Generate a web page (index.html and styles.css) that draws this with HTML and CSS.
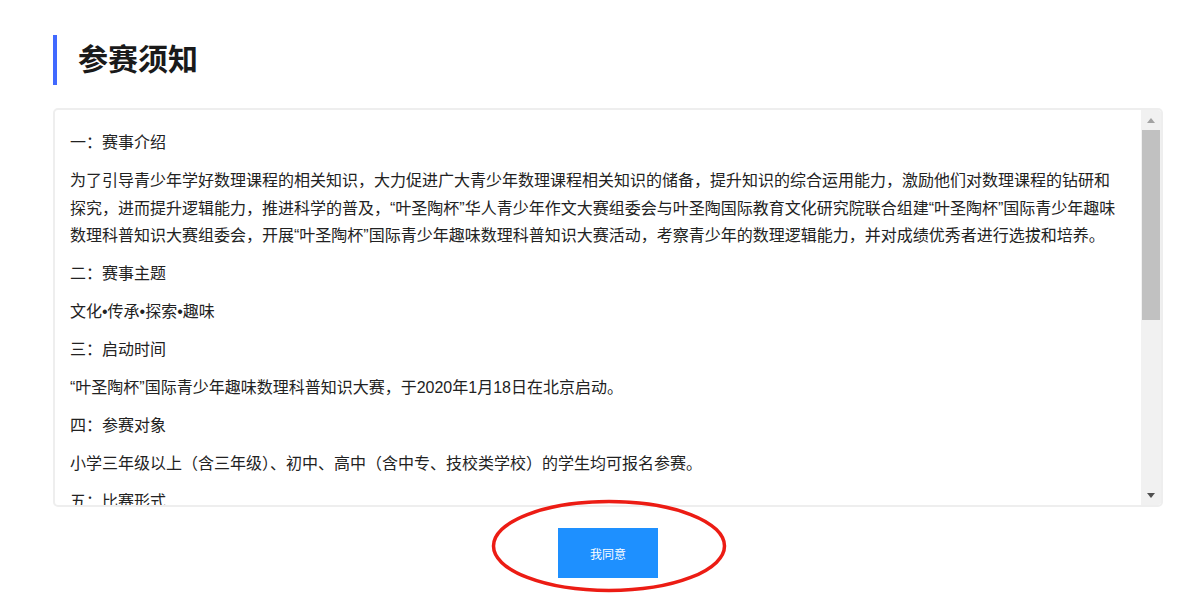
FILE: index.html
```html
<!DOCTYPE html>
<html lang="zh-CN">
<head>
    <meta charset="UTF-8">
    <meta name="viewport" content="width=device-width, initial-scale=1.0">
    <title>参赛须知</title>
    <link rel="stylesheet" href="styles.css">
</head>
<body>

    <div class="page">
        <h2 class="title">参赛须知</h2>

        <div class="notice">
            <div class="notice-body">
                <p>一：赛事介绍</p>
                <p>为了引导青少年学好数理课程的相关知识，大力促进广大青少年数理课程相关知识的储备，提升知识的综合运用能力，激励他们对数理课程的钻研和探究，进而提升逻辑能力，推进科学的普及，“叶圣陶杯”华人青少年作文大赛组委会与叶圣陶国际教育文化研究院联合组建“叶圣陶杯”国际青少年趣味数理科普知识大赛组委会，开展“叶圣陶杯”国际青少年趣味数理科普知识大赛活动，考察青少年的数理逻辑能力，并对成绩优秀者进行选拔和培养。</p>
                <p>二：赛事主题</p>
                <p>文化•传承•探索•趣味</p>
                <p>三：启动时间</p>
                <p>“叶圣陶杯”国际青少年趣味数理科普知识大赛，于2020年1月18日在北京启动。</p>
                <p>四：参赛对象</p>
                <p>小学三年级以上（含三年级）、初中、高中（含中专、技校类学校）的学生均可报名参赛。</p>
                <p>五：比赛形式</p>
                <p>大赛分为初赛、复赛和决赛三个阶段，初赛采用线上答题的形式进行。</p>
                <p>六：奖项设置</p>
                <p>大赛设一等奖、二等奖、三等奖及优秀奖，获奖者颁发证书。</p>
            </div>
            <div class="scrollbar">
                <div class="scroll-btn"><span class="arrow-up"></span></div>
                <div class="scroll-track"><div class="scroll-thumb"></div></div>
                <div class="scroll-btn"><span class="arrow-down"></span></div>
            </div>
        </div>

        <div class="actions">
            <button class="agree-btn" type="button">我同意</button>
            <!-- red mark drawn over the button -->
            <svg class="mark" width="238" height="96" viewBox="0 0 238 96">
                <ellipse cx="118" cy="47" rx="115.5" ry="44.5" fill="none" stroke="#ec1c14" stroke-width="3.5"/>
            </svg>
        </div>
    </div>

</body>
</html>
```

FILE: styles.css
```css
body {
    margin: 0;
    padding: 0;
    background: #fff;
    font-family: "Liberation Sans", "Noto Sans CJK SC", sans-serif;
    color: #222;
}

.page {
    width: 1110px;
    margin-left: 53px;
    padding: 35px 0 30px;
}

.title {
    margin: 0;
    height: 50px;
    line-height: 50px;
    padding-left: 21px;
    border-left: 4px solid #4169ff;
    font-size: 30px;
    font-weight: bold;
    color: #1a1a1a;
}

.notice {
    display: flex;
    height: 395px;
    margin-top: 23px;
    border: 2px solid #eee;
    border-radius: 5px;
    overflow: hidden;
}

.notice-body {
    flex: 1;
    overflow: hidden;
    padding: 19px 16px 0 15px;
    font-size: 16px;
    line-height: 27.5px;
}

.notice-body p {
    margin: 0 0 10.5px;
}

.scrollbar {
    width: 20px;
    display: flex;
    flex-direction: column;
    background: #f1f1f1;
}

.scroll-btn {
    height: 20px;
    display: flex;
    align-items: center;
    justify-content: center;
}

.arrow-up,
.arrow-down {
    width: 0;
    height: 0;
    border-left: 4.5px solid transparent;
    border-right: 4.5px solid transparent;
}

.arrow-up {
    border-bottom: 5px solid #a3a3a3;
}

.arrow-down {
    border-top: 5px solid #505050;
}

.scroll-track {
    flex: 1;
}

.scroll-thumb {
    height: 190px;
    margin: 0 1px;
    background: #c1c1c1;
}

.actions {
    position: relative;
    display: flex;
    justify-content: center;
    margin-top: 21px;
}

.agree-btn {
    width: 100px;
    height: 50px;
    border: none;
    background: #1e90ff;
    color: #fff;
    font-family: "Noto Sans CJK SC", sans-serif;
    font-size: 12px;
    cursor: pointer;
}

.mark {
    position: absolute;
    left: 438px;
    top: -29px;
    pointer-events: none;
}
```
